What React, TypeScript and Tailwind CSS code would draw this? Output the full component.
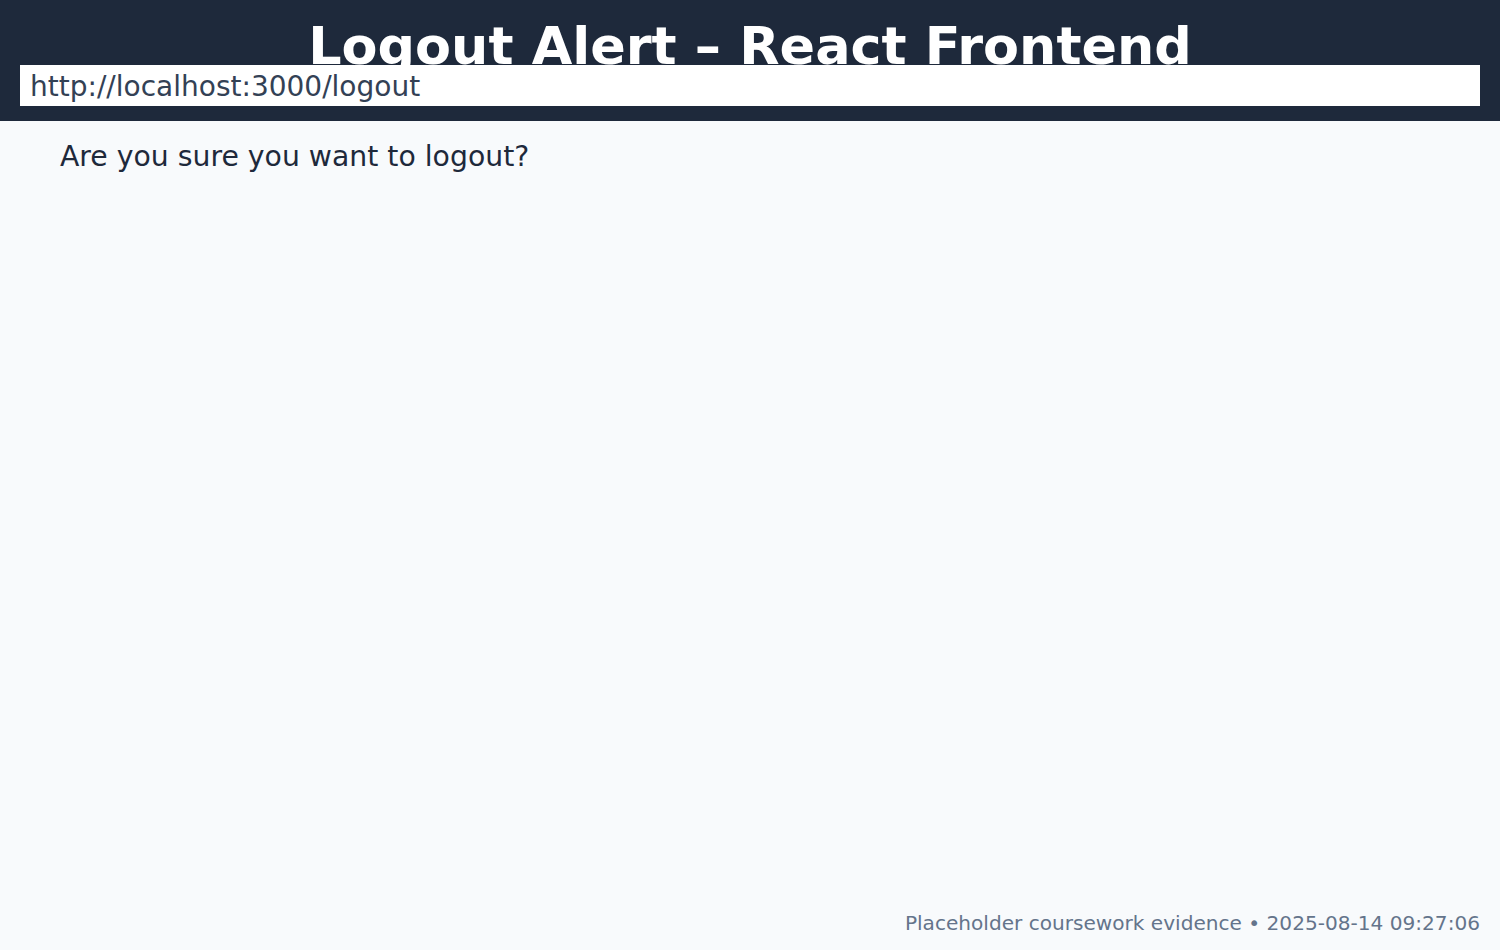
export default function App() {
  return (
    <div
      className="flex min-h-screen flex-col bg-[#f8fafc]"
      style={{ fontFamily: '"DejaVu Sans", sans-serif' }}
    >
      <header className="bg-[#1e293b] px-5 pb-[15px] pt-[20px]">
        <h1 className="text-center text-[52.4px] font-bold leading-[52px] text-white">
          Logout Alert – React Frontend
        </h1>
        <div className="relative -mt-[7px] h-[41px] bg-white px-[10px] text-[28px] leading-[43px] text-[#334155]">
          http://localhost:3000/logout
        </div>
      </header>

      <main className="flex-1 px-[60px] pt-[18px]">
        <p className="text-[28.3px] leading-[36px] text-[#1e293b]">
          Are you sure you want to logout?
        </p>
      </main>

      <footer className="px-5 pb-[15px] text-right text-[20.1px] leading-[24px] text-[#64748b]">
        Placeholder coursework evidence • 2025-08-14 09:27:06
      </footer>
    </div>
  );
}
